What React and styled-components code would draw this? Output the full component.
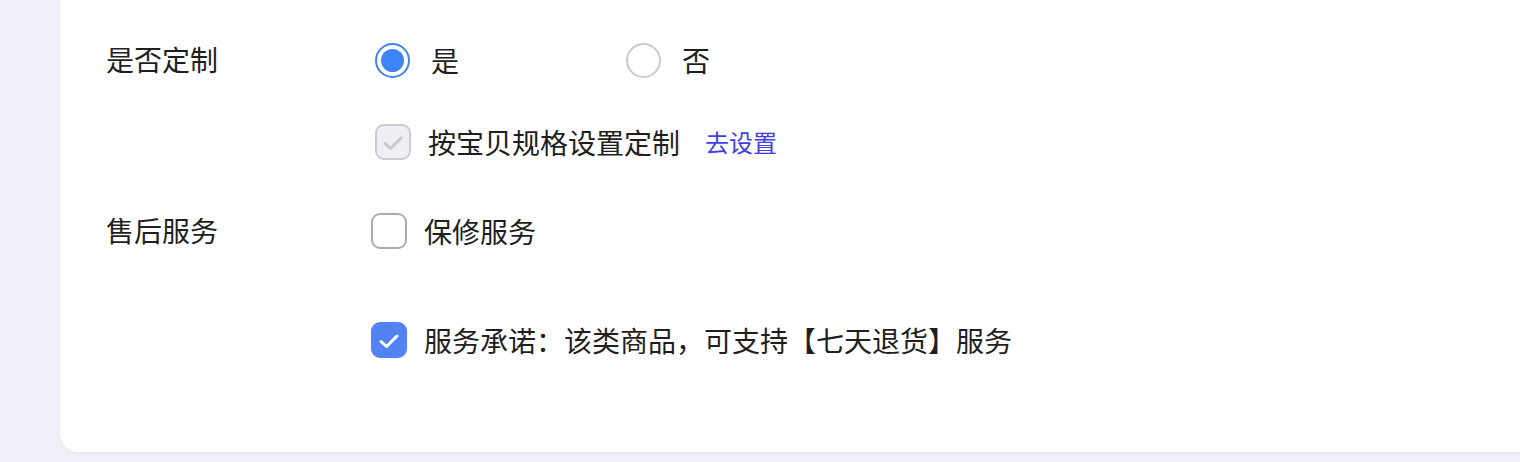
import React from "react";
import styled, { createGlobalStyle } from "styled-components";

const GlobalStyle = createGlobalStyle`
  html, body {
    margin: 0;
    padding: 0;
    background: #eff0f8;
    font-family: "Noto Sans CJK SC", "Noto Sans", sans-serif;
    color: #1f1f22;
  }
  * { box-sizing: border-box; }
`;

const Page = styled.div`
  width: 1520px;
  height: 462px;
  overflow: hidden;
  padding: 0 0 10px 60px;
  display: flex;
`;

const Card = styled.div`
  flex: 1;
  background: #fefefe;
  border-radius: 0 0 0 18px;
  box-shadow: 0 1px 3px rgba(180, 182, 210, 0.25);
  padding: 42px 0 0 46px;
  display: flex;
  flex-direction: column;
  gap: 53px;
`;

const FormItem = styled.div`
  display: grid;
  grid-template-columns: 265px 1fr;
  align-items: start;
`;

const Label = styled.div`
  font-size: 28px;
  line-height: 34px;
  height: 36px;
  white-space: nowrap;
`;

const Controls = styled.div`
  display: flex;
  flex-direction: column;
  gap: ${(p) => p.$gap}px;
  padding-left: ${(p) => p.$indent || 0}px;
`;

const RadioGroup = styled.div`
  display: flex;
  align-items: center;
  height: 36px;
`;

const RadioOption = styled.label`
  display: flex;
  align-items: center;
  gap: 21px;
  min-width: 251px;
  font-size: 28px;
  line-height: 34px;
`;

const RadioCircle = styled.span`
  width: 35px;
  height: 35px;
  border-radius: 50%;
  border: 2px solid ${(p) => (p.$checked ? "#3f83f8" : "#c9cad2")};
  background: #fff;
  display: flex;
  align-items: center;
  justify-content: center;
  flex: none;
  &::after {
    content: "";
    width: 23px;
    height: 23px;
    border-radius: 50%;
    background: ${(p) => (p.$checked ? "#3f83f8" : "transparent")};
  }
`;

const CheckRow = styled.label`
  display: flex;
  align-items: center;
  height: 36px;
  gap: 17px;
  font-size: 28px;
  line-height: 34px;
  white-space: nowrap;
`;

const Box = styled.span`
  width: 36px;
  height: 36px;
  border-radius: 9px;
  flex: none;
  display: flex;
  align-items: center;
  justify-content: center;
  background: ${(p) =>
    p.$variant === "checked" ? "#5282f4" : p.$variant === "disabled" ? "#eeeff3" : "#fff"};
  border: 2px solid
    ${(p) =>
      p.$variant === "checked" ? "#5282f4" : p.$variant === "disabled" ? "#cbccd3" : "#a9aab6"};
  & > svg {
    flex: none;
  }
`;

const LinkText = styled.a`
  font-size: 24px;
  color: #3e3ee8;
  margin-left: 8px;
  text-decoration: none;
  cursor: pointer;
`;

const Check = ({ color }) => (
  <svg width="24" height="24" viewBox="0 0 24 24" fill="none">
    <path
      d="M4 13.5 L9.5 18.5 L20 8"
      stroke={color}
      strokeWidth="3"
      strokeLinecap="round"
      strokeLinejoin="round"
    />
  </svg>
);

const Checkbox = ({ variant }) => (
  <Box $variant={variant}>
    {variant === "checked" && <Check color="#fff" />}
    {variant === "disabled" && <Check color="#c6c7cc" />}
  </Box>
);

export default function App() {
  return (
    <>
      <GlobalStyle />
      <Page>
        <Card>
          <FormItem>
            <Label>是否定制</Label>
            <Controls $gap={46} $indent={4}>
              <RadioGroup>
                <RadioOption>
                  <RadioCircle $checked />
                  是
                </RadioOption>
                <RadioOption>
                  <RadioCircle />
                  否
                </RadioOption>
              </RadioGroup>
              <CheckRow>
                <Checkbox variant="disabled" />
                按宝贝规格设置定制
                <LinkText>去设置</LinkText>
              </CheckRow>
            </Controls>
          </FormItem>
          <FormItem>
            <Label>售后服务</Label>
            <Controls $gap={73}>
              <CheckRow>
                <Checkbox variant="empty" />
                保修服务
              </CheckRow>
              <CheckRow>
                <Checkbox variant="checked" />
                服务承诺：该类商品，可支持【七天退货】服务
              </CheckRow>
            </Controls>
          </FormItem>
        </Card>
      </Page>
    </>
  );
}
